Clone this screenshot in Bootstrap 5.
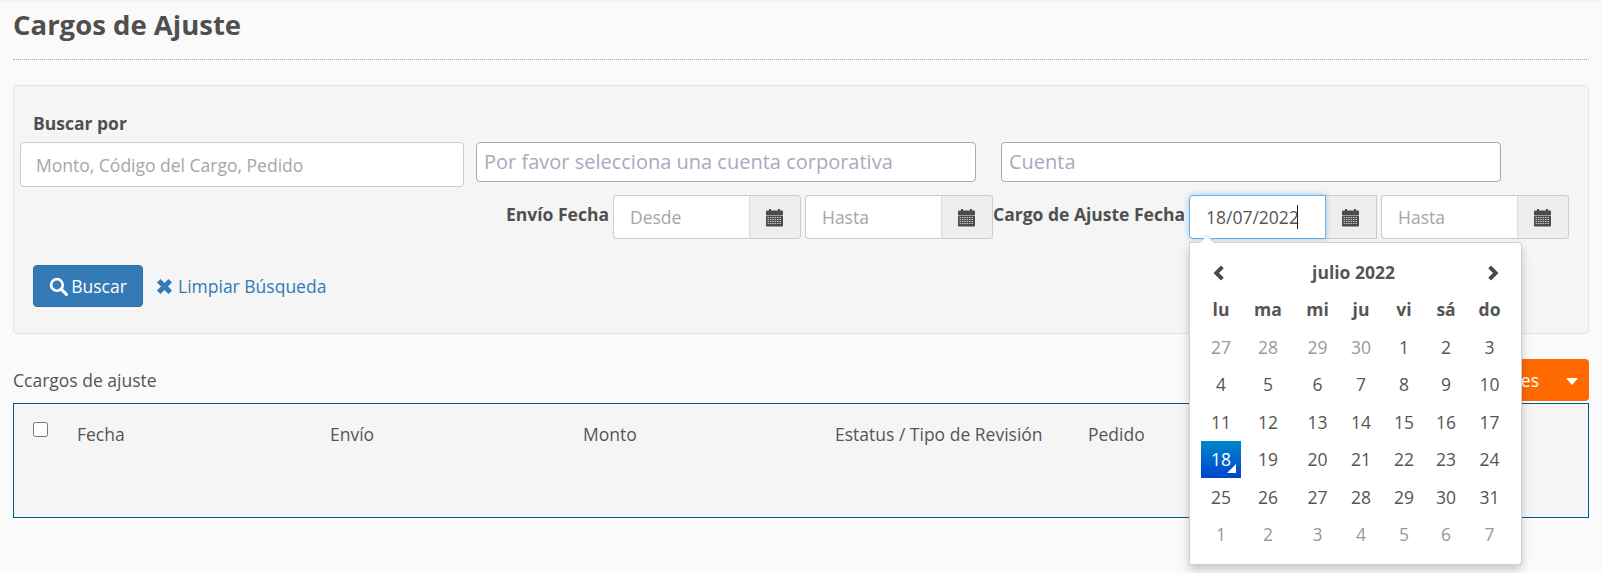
<!DOCTYPE html>
<html lang="es">
<head>
<meta charset="utf-8">
<title>Cargos de Ajuste</title>
<link href="https://cdn.jsdelivr.net/npm/bootstrap@5.3.0/dist/css/bootstrap.min.css" rel="stylesheet">
<style>
html,body{height:100%;overflow:hidden}
body{background:#fafafa;color:#555;font:17.5px/22px "Open Sans",sans-serif;box-shadow:inset 0 2px 2px -1px rgba(0,0,0,.04)}
.pagewrap{padding:0 13px}
.pagetitle{font:700 27.5px/36px "Open Sans",sans-serif;color:#4f4f4f;margin:0;padding-top:7px;height:60px;border-bottom:1px dotted #aaa}
.searchwell{margin-top:25px;height:249px;background:#f5f5f5;border:1px solid #e3e3e3;border-radius:4px;padding:26px 19px 0 6px}
.fieldlabel{font-weight:700;color:#4f4f4f;white-space:nowrap}
.toplabel{margin:0 0 8px 13px;display:block;height:22px}
.toprow{display:flex;align-items:flex-start;height:44px}
.toprow .form-control{border-radius:4px;color:#555}
.plainfield{width:444px;height:44.5px;padding:2px 15px 0;font-size:17.5px;border:1px solid #ccc}
.plainfield::placeholder{color:#a6a6a6}
.acctfield{height:40px;width:500px;padding:0 7px 2px;font-size:20px;border:1px solid #aaa}
.acctfield::placeholder{color:#a9a9bd}
.acct-one{margin-left:12px}
.acct-two{margin-left:25px}
.daterow{display:flex;justify-content:flex-end;align-items:flex-start;margin-top:9px;height:44px}
.daterow .fieldlabel{margin:8px 4px 0 0}
.dategroup{position:relative;width:188px;height:44px;margin-right:4px;flex:none}
.dategroup:last-child,.dategroup.tightgroup{margin-right:0}
.dategroup .form-control{width:137px;flex:none;height:44px;padding:0 16px 1px;font-size:17.5px;color:#555;border:1px solid #ccc;border-radius:4px 0 0 4px;border-right:1px solid #ddd}
.dategroup .form-control::placeholder{color:#a6a6a6}
.dategroup .form-control.activefield{border-color:#66afe9;box-shadow:0 0 6px rgba(102,175,233,.6);position:relative;z-index:2}
.dategroup .input-group-text{flex:1;justify-content:center;padding:0;background:#eee;border:1px solid #ccc;border-left:0;border-radius:0 4px 4px 0;margin-left:1px}
.textcaret{position:absolute;left:109px;top:10px;width:1px;height:24px;background:#222;z-index:3}
.actionrow{display:flex;align-items:center;margin-top:26px;margin-left:13px}
.searchbtn{width:110px;height:42px;background:#337ab7;border:1px solid #2e6da4;color:#fff;font-size:17.5px;padding:0;border-radius:4px;display:flex;align-items:center;justify-content:center;gap:3px}
.clearlink{color:#337ab7;text-decoration:none;margin-left:14px;display:flex;align-items:center;gap:6px}
.listhead{display:flex;justify-content:space-between;align-items:center;margin-top:25px;height:42px}
.ordersbtn{width:170px;height:42px;background:#ff6a00;border:0;border-radius:4px;color:#fff;font-size:17.5px;padding:0 11px 0 0;display:flex;align-items:center;justify-content:flex-end;gap:27px}
.ordersbtn i{display:block;border-top:7px solid #fff;border-left:6.5px solid transparent;border-right:6.5px solid transparent;margin-top:2px}
.gridbox{margin-top:2px;height:115px;background:#f5f5f5;border:1px solid #005a8e}
.gridtab{table-layout:fixed;width:100%;border-collapse:collapse}
.gridtab td{padding:19px 0 0;vertical-align:top;height:44px}
.gridtab .form-check-input{margin:0 0 0 19px;width:15px;height:15px;border:1px solid #767676;border-radius:2.5px;display:block;margin-top:-1px;background-color:#fff}
.calpop{position:absolute;left:1px;top:47px;width:333px;height:323px;background:#fff;border:1px solid rgba(0,0,0,.18);border-radius:4px;box-shadow:0 5px 10px rgba(0,0,0,.2);padding:10px 0 0 11px;z-index:5}
.calpop::before,.calpop::after{content:"";position:absolute;left:9px;border-left:8px solid transparent;border-right:8px solid transparent}
.calpop::before{top:-8px;border-bottom:8px solid #ccc}
.calpop::after{top:-7px;border-bottom:8px solid #fff}
.caltab{table-layout:fixed;width:312px;border-collapse:collapse;color:#555}
.caltab td,.caltab th{height:37.5px;padding:0;text-align:center;font-size:17.5px;line-height:20px}
.caltab th{font-weight:700}
.caltab td.dim{color:#999}
.caltab td.picked{background:linear-gradient(#08c,#04c);color:#fff;position:relative}
.caltab td.picked::after{content:"";position:absolute;right:5px;bottom:5px;border-left:9px solid transparent;border-bottom:9px solid #fff}
</style>
</head>
<body>
<div class="pagewrap">
  <h1 class="pagetitle">Cargos de Ajuste</h1>
  <div class="searchwell">
    <label class="fieldlabel toplabel">Buscar por</label>
    <div class="toprow">
      <input class="form-control plainfield flex-shrink-0" placeholder="Monto, Código del Cargo, Pedido">
      <input class="form-control acctfield acct-one flex-shrink-0" placeholder="Por favor selecciona una cuenta corporativa">
      <input class="form-control acctfield acct-two flex-shrink-0" placeholder="Cuenta">
    </div>
    <div class="daterow">
      <span class="fieldlabel">Envío Fecha</span>
      <div class="dategroup input-group flex-nowrap">
        <input class="form-control" placeholder="Desde">
        <span class="input-group-text"><svg width="17" height="19" viewBox="0 0 17 19"><use href="#calicon"/></svg></span>
      </div>
      <div class="dategroup tightgroup input-group flex-nowrap">
        <input class="form-control" placeholder="Hasta">
        <span class="input-group-text"><svg width="17" height="19" viewBox="0 0 17 19"><use href="#calicon"/></svg></span>
      </div>
      <span class="fieldlabel">Cargo de Ajuste Fecha</span>
      <div class="dategroup input-group flex-nowrap">
        <input class="form-control activefield" value="18/07/2022">
        <i class="textcaret"></i>
        <span class="input-group-text"><svg width="17" height="19" viewBox="0 0 17 19"><use href="#calicon"/></svg></span>
        <div class="calpop">
          <table class="caltab">
            <colgroup><col style="width:40px"><col style="width:54px"><col style="width:45px"><col style="width:42px"><col style="width:44px"><col style="width:40px"><col style="width:47px"></colgroup>
            <tr>
              <th><svg width="20" height="18" viewBox="0 0 20 18"><path d="M10 1.500 12.800 4.300 8 9l4.800 4.700L10 16.500 2.500 9z" fill="#4a4a4a"/></svg></th>
              <th colspan="5">julio 2022</th>
              <th><svg width="20" height="18" viewBox="0 0 20 18"><path d="M11 1.500 8.200 4.300 13 9l-4.800 4.700L11 16.500 18.500 9z" fill="#4a4a4a"/></svg></th>
            </tr>
            <tr><th>lu</th><th>ma</th><th>mi</th><th>ju</th><th>vi</th><th>sá</th><th>do</th></tr>
            <tr><td class="dim">27</td><td class="dim">28</td><td class="dim">29</td><td class="dim">30</td><td>1</td><td>2</td><td>3</td></tr>
            <tr><td>4</td><td>5</td><td>6</td><td>7</td><td>8</td><td>9</td><td>10</td></tr>
            <tr><td>11</td><td>12</td><td>13</td><td>14</td><td>15</td><td>16</td><td>17</td></tr>
            <tr><td class="picked">18</td><td>19</td><td>20</td><td>21</td><td>22</td><td>23</td><td>24</td></tr>
            <tr><td>25</td><td>26</td><td>27</td><td>28</td><td>29</td><td>30</td><td>31</td></tr>
            <tr><td class="dim">1</td><td class="dim">2</td><td class="dim">3</td><td class="dim">4</td><td class="dim">5</td><td class="dim">6</td><td class="dim">7</td></tr>
          </table>
        </div>
      </div>
      <div class="dategroup input-group flex-nowrap">
        <input class="form-control" placeholder="Hasta">
        <span class="input-group-text"><svg width="17" height="19" viewBox="0 0 17 19"><use href="#calicon"/></svg></span>
      </div>
    </div>
    <div class="actionrow">
      <button type="button" class="btn searchbtn"><svg width="19" height="19" viewBox="0 0 18 18"><circle cx="7.500" cy="7.500" r="5.500" fill="none" stroke="#fff" stroke-width="2.500"/><path d="m11.500 11.500 5 5" stroke="#fff" stroke-width="3" stroke-linecap="round"/></svg>Buscar</button>
      <a class="clearlink" href="#"><svg width="15" height="15" viewBox="0 0 15 15"><path d="M3.500 0 7.500 4 11.500 0 15 3.500 11 7.500 15 11.500 11.500 15 7.500 11 3.500 15 0 11.500 4 7.500 0 3.500z" fill="#337ab7"/></svg>Limpiar Búsqueda</a>
    </div>
  </div>
  <div class="listhead">
    <span>Ccargos de ajuste</span>
    <button type="button" class="btn ordersbtn">Acciones<i></i></button>
  </div>
  <div class="gridbox">
    <table class="gridtab">
      <colgroup><col style="width:63px"><col style="width:253px"><col style="width:253px"><col style="width:252px"><col style="width:253px"><col></colgroup>
      <tr>
        <td><input class="form-check-input" type="checkbox" aria-label="Todos"></td>
        <td>Fecha</td><td>Envío</td><td>Monto</td><td>Estatus / Tipo de Revisión</td><td>Pedido</td>
      </tr>
    </table>
  </div>
</div>
<svg width="0" height="0" class="d-block" aria-hidden="true">
  <defs>
    <g id="calicon">
      <path d="M0 3.500a1 1 0 0 1 1-1h2V1h2v1.500h7V1h2v1.500h2a1 1 0 0 1 1 1V7H0z" fill="#4a4a4a"/>
      <rect x="0" y="7.500" width="17" height="11" rx="1" fill="#4a4a4a"/>
      <path d="M1.500 9.500h14M1.500 11.500h14M1.500 13.500h14M1.500 15.500h14" stroke="#eee" stroke-width=".8" stroke-dasharray="1.500 .9"/>
    </g>
  </defs>
</svg>
</body>
</html>
